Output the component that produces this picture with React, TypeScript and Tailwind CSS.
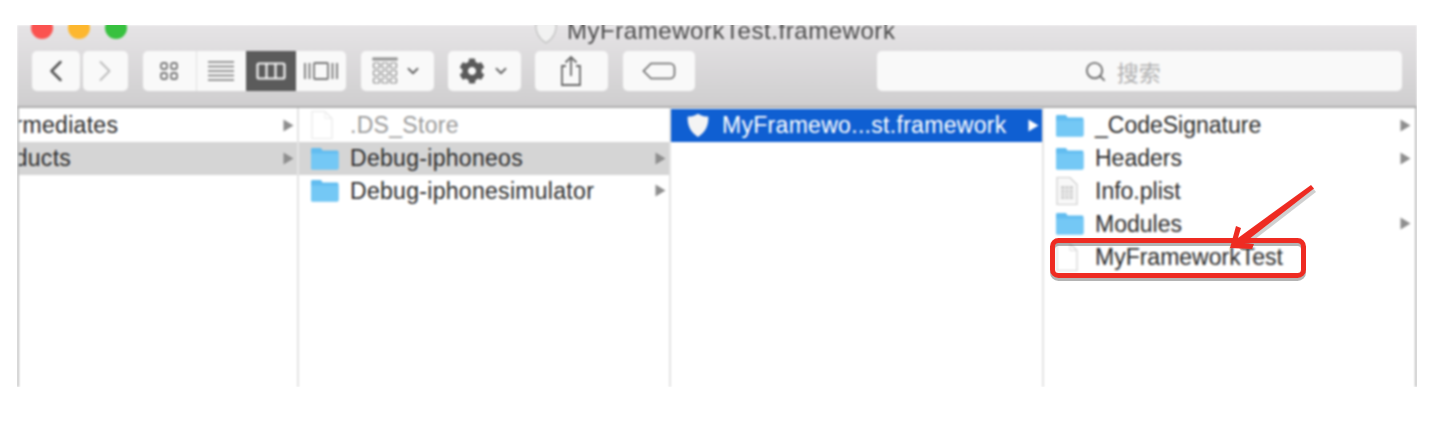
import { FaCog } from "react-icons/fa";
import { ChevronDown, ChevronLeft, ChevronRight, Search } from "lucide-react";

function Folder() {
  return (
    <svg width="29" height="23" viewBox="0 0 29 23" className="shrink-0">
      <path d="M1 4V2.500C1 1.500 1.600 1 2.500 1H10c1 0 1.500 .5 2 1.500L12.500 3.500H27c.8 0 1.500 .7 1.500 1.500V21c0 .9-.7 1.500-1.500 1.500H2.500C1.600 22.500 1 21.900 1 21Z" fill="#62bdf0" />
      <path d="M1 6.500H28.500V21c0 .9-.7 1.500-1.500 1.500H2.500C1.600 22.500 1 21.900 1 21Z" fill="#74c8f5" />
    </svg>
  );
}

function Doc({ faint = false }: { faint?: boolean }) {
  return (
    <svg width="24" height="30" viewBox="0 0 24 30" className="shrink-0">
      <path d="M2 1.500H15L22 8.500V28.500H2Z" fill="#fff" stroke={faint ? "#e8e8e8" : "#d4d4d4"} strokeWidth="1.200" />
      <path d="M15 1.500V8.500H22" fill="none" stroke={faint ? "#eeeeee" : "#dddddd"} strokeWidth="1" />
    </svg>
  );
}

function Plist() {
  return (
    <svg width="24" height="30" viewBox="0 0 24 30" className="shrink-0">
      <path d="M2 1.500H15L22 8.500V28.500H2Z" fill="#f8f8f8" stroke="#cfcfcf" strokeWidth="1.200" />
      <path d="M6 10H18V23H6Z" fill="#cfcfcf" />
      <path d="M6 13.500H18M6 17H18M6 20H18M10 10V23M14 10V23" stroke="#f4f4f4" strokeWidth="1" />
    </svg>
  );
}

function Shield({ color, stroke = "none", size = 24 }: { color: string; stroke?: string; size?: number }) {
  return (
    <svg width={size} height={size} viewBox="0 0 24 24" className="shrink-0">
      <path d="M12 1.500C15 3.500 18 4 21.500 4.200C22 12 19 19 12 23C5 19 2 12 2.500 4.200C6 4 9 3.500 12 1.500Z" fill={color} stroke={stroke} strokeWidth="1.200" />
    </svg>
  );
}

function Tri({ color = "#8e8e8e" }: { color?: string }) {
  return (
    <svg width="11" height="13" viewBox="0 0 11 13" className="shrink-0">
      <path d="M0.500 0.500L10.500 6.500L0.500 12.500Z" fill={color} />
    </svg>
  );
}

function Row({
  icon,
  label,
  arrow = false,
  selected = false,
  grey = false,
  faint = false,
  clip = 0,
  pad = "pr-[3px]",
}: {
  icon?: React.ReactNode;
  label: string;
  arrow?: boolean;
  selected?: boolean;
  grey?: boolean;
  faint?: boolean;
  clip?: number;
  pad?: string;
}) {
  const bg = selected ? "bg-[#0f5fd2]" : grey ? "bg-[#d5d5d5]" : "";
  const text = selected ? "text-white" : faint ? "text-[#9a9a9a]" : "text-[#2c2c2c]";
  return (
    <div className={`h-[32.8px] flex items-center ${bg} ${text} ${pad}`}>
      {icon ? <div className="w-[51px] pl-[11px] flex items-center shrink-0">{icon}</div> : null}
      <span className="flex-1 whitespace-nowrap" style={clip ? { marginLeft: -clip } : undefined}>
        {label}
      </span>
      {arrow ? <Tri color={selected ? "#ffffff" : "#8e8e8e"} /> : null}
    </div>
  );
}

function Btn({ className = "", children }: { className?: string; children?: React.ReactNode }) {
  return (
    <div className={`h-[40px] bg-[#f9f9f9] rounded-[5px] flex items-center justify-center text-[#666] ${className}`}>
      {children}
    </div>
  );
}

const cells = [0, 1, 2];

export default function App() {
  return (
    <div className="w-[1446px] h-[440px] bg-white pt-[25px] pl-[17px] overflow-hidden" style={{ fontFamily: '"Liberation Sans", Arial, sans-serif' }}>
      <div className="w-[1400px] h-[362px] overflow-hidden">
        <div className="h-full flex flex-col blur-[0.8px]">
          {/* toolbar */}
          <div className="h-[83px] shrink-0 bg-gradient-to-b from-[#e6e4e6] to-[#cfcecf] border-b-2 border-[#aeaeae] relative">
            <div className="h-[26px] -mt-[10px] flex items-center pl-[14px] gap-[15px] relative">
              <div className="w-[22px] h-[22px] rounded-full bg-[#fb5350]" />
              <div className="w-[22px] h-[22px] rounded-full bg-[#fdb72e]" />
              <div className="w-[22px] h-[22px] rounded-full bg-[#37c13f]" />
              <div className="absolute left-[516px] top-[3px] flex items-center gap-[8px] text-[24px] leading-[26px] text-[#4a4a4a] whitespace-nowrap">
                <Shield color="#f2f2f2" stroke="#c4c4c4" size={26} />
                <span className="tracking-[0.55px]">MyFrameworkTest.framework</span>
              </div>
            </div>
            <div className="flex items-center pl-[15px] pr-[15px] mt-[10px]">
              <Btn className="w-[48px]">
                <ChevronLeft size={36} strokeWidth={1.700} className="text-[#555]" />
              </Btn>
              <Btn className="w-[45px] ml-[3px]">
                <ChevronRight size={36} strokeWidth={1.200} className="text-[#bbbbbb]" />
              </Btn>
              <div className="ml-[15px] flex h-[40px] w-[203px] bg-[#f9f9f9] rounded-[5px] overflow-hidden">
                <div className="w-[54px] flex items-center justify-center border-r border-[#e2e2e2]">
                  <svg width="20" height="20" viewBox="0 0 20 20" fill="none" stroke="#777" strokeWidth="1.800">
                    <rect x="2" y="2" width="6" height="6" rx="2" />
                    <rect x="12" y="2" width="6" height="6" rx="2" />
                    <rect x="2" y="12" width="6" height="6" rx="2" />
                    <rect x="12" y="12" width="6" height="6" rx="2" />
                  </svg>
                </div>
                <div className="w-[49px] flex items-center justify-center">
                  <svg width="26" height="22" viewBox="0 0 26 22" stroke="#777" strokeWidth="1.700">
                    <path d="M0 2H26M0 6.500H26M0 11H26M0 15.500H26M0 20H26" />
                  </svg>
                </div>
                <div className="w-[50px] flex items-center justify-center bg-[#5b5b5b]">
                  <svg width="30" height="18" viewBox="0 0 30 18" fill="none" stroke="#f4f4f4" strokeWidth="2.200">
                    <rect x="1.500" y="1.500" width="27" height="15" rx="1.500" />
                    <path d="M10.500 1.500V16.500M19.500 1.500V16.500" />
                  </svg>
                </div>
                <div className="w-[50px] flex items-center justify-center">
                  <svg width="36" height="20" viewBox="0 0 36 20" fill="none" stroke="#777" strokeWidth="1.800">
                    <rect x="11" y="2" width="14" height="16" rx="1" />
                    <path d="M2 2V18M6.500 2V18M29.500 2V18M34 2V18" />
                  </svg>
                </div>
              </div>
              <Btn className="w-[73px] ml-[15px] gap-[6px]">
                <svg width="26" height="28" viewBox="0 0 26 28" fill="none" stroke="#8a8a8a" strokeWidth="1.200">
                  <path d="M1 1H25V3H1Z" fill="#9a9a9a" />
                  {cells.map((c) => (
                    <g key={c}>
                      <rect x={1.500 + c * 8.500} y="6" width="6" height="5" rx="1" />
                      <rect x={1.500 + c * 8.500} y="13.500" width="6" height="5" rx="1" />
                      <rect x={1.500 + c * 8.500} y="21" width="6" height="5" rx="1" />
                    </g>
                  ))}
                </svg>
                <ChevronDown size={18} strokeWidth={2.500} className="text-[#666]" />
              </Btn>
              <Btn className="w-[73px] ml-[14px] gap-[7px]">
                <FaCog size={26} className="text-[#5a5a5a]" />
                <ChevronDown size={18} strokeWidth={2.500} className="text-[#666]" />
              </Btn>
              <Btn className="w-[73px] ml-[14px]">
                <svg width="24" height="32" viewBox="0 0 24 32" fill="none" stroke="#666" strokeWidth="1.800">
                  <path d="M7 11H3V30H21V11H17" />
                  <path d="M12 21V2M6.500 7.500L12 2L17.500 7.500" />
                </svg>
              </Btn>
              <Btn className="w-[73px] ml-[15px]">
                <svg width="34" height="18" viewBox="0 0 34 18" fill="none" stroke="#666" strokeWidth="1.600">
                  <path d="M9 1.500H28C30.500 1.500 32.500 3.500 32.500 6V12C32.500 14.500 30.500 16.500 28 16.500H9L1.500 9Z" />
                </svg>
              </Btn>
              <Btn className="w-[525px] ml-[182px] gap-[10px] pr-[35px]">
                <Search size={23} strokeWidth={2} className="text-[#707070]" />
                <span className="text-[22px] text-[#b0b0b0]" style={{ fontFamily: '"Noto Sans CJK SC", sans-serif' }}>
                  搜索
                </span>
              </Btn>
            </div>
          </div>
          {/* columns */}
          <div className="flex-1 flex bg-white text-[23px] tracking-[0.3px] leading-[32px] border-l-2 border-r-2 border-[#bdbdbd]">
            <div className="w-[280px] shrink-0 overflow-hidden border-r-2 border-[#e4e4e4] pt-[1px]">
              <Row label="Intermediates" arrow clip={44} />
              <Row label="Products" arrow grey clip={41} />
            </div>
            <div className="w-[372px] shrink-0 border-r-2 border-[#e4e4e4] pt-[1px]">
              <Row icon={<Doc faint />} label=".DS_Store" faint />
              <Row icon={<Folder />} label="Debug-iphoneos" arrow grey />
              <Row icon={<Folder />} label="Debug-iphonesimulator" arrow />
            </div>
            <div className="w-[373px] shrink-0 border-r-2 border-[#e4e4e4] pt-[1px]">
              <Row
                icon={
                  <div className="ml-[3px]">
                    <Shield color="#f4f4f4" size={26} />
                  </div>
                }
                label="MyFramewo...st.framework"
                arrow
                selected
              />
            </div>
            <div className="flex-1 pt-[1px] tracking-normal">
              <Row icon={<Folder />} label="_CodeSignature" arrow pad="pr-[4px]" />
              <Row icon={<Folder />} label="Headers" arrow pad="pr-[4px]" />
              <Row icon={<Plist />} label="Info.plist" pad="pr-[4px]" />
              <Row icon={<Folder />} label="Modules" arrow pad="pr-[4px]" />
              <Row icon={<Doc />} label="MyFrameworkTest" pad="pr-[4px]" />
            </div>
          </div>
        </div>
      </div>
      {/* annotation */}
      <svg width="1446" height="440" viewBox="0 0 1446 440" className="absolute left-0 top-0 pointer-events-none blur-[0.7px]">
        <rect x="1052.500" y="240.500" width="251" height="35" rx="6" fill="none" stroke="#444" strokeOpacity="0.4" strokeWidth="5" transform="translate(0 3)" />
        <path d="M1312 185L1315 189L1240 247L1236 243Z" fill="#444" fillOpacity="0.25" transform="translate(1 3)" />
        <rect x="1052.500" y="240.500" width="251" height="35" rx="6" fill="none" stroke="#ee2b22" strokeWidth="5" />
        <path d="M1311 185L1314 188.500L1244 243L1254 244L1252 249L1230 248L1236 226L1241 228L1238 238Z" fill="#ee2b22" />
      </svg>
    </div>
  );
}
